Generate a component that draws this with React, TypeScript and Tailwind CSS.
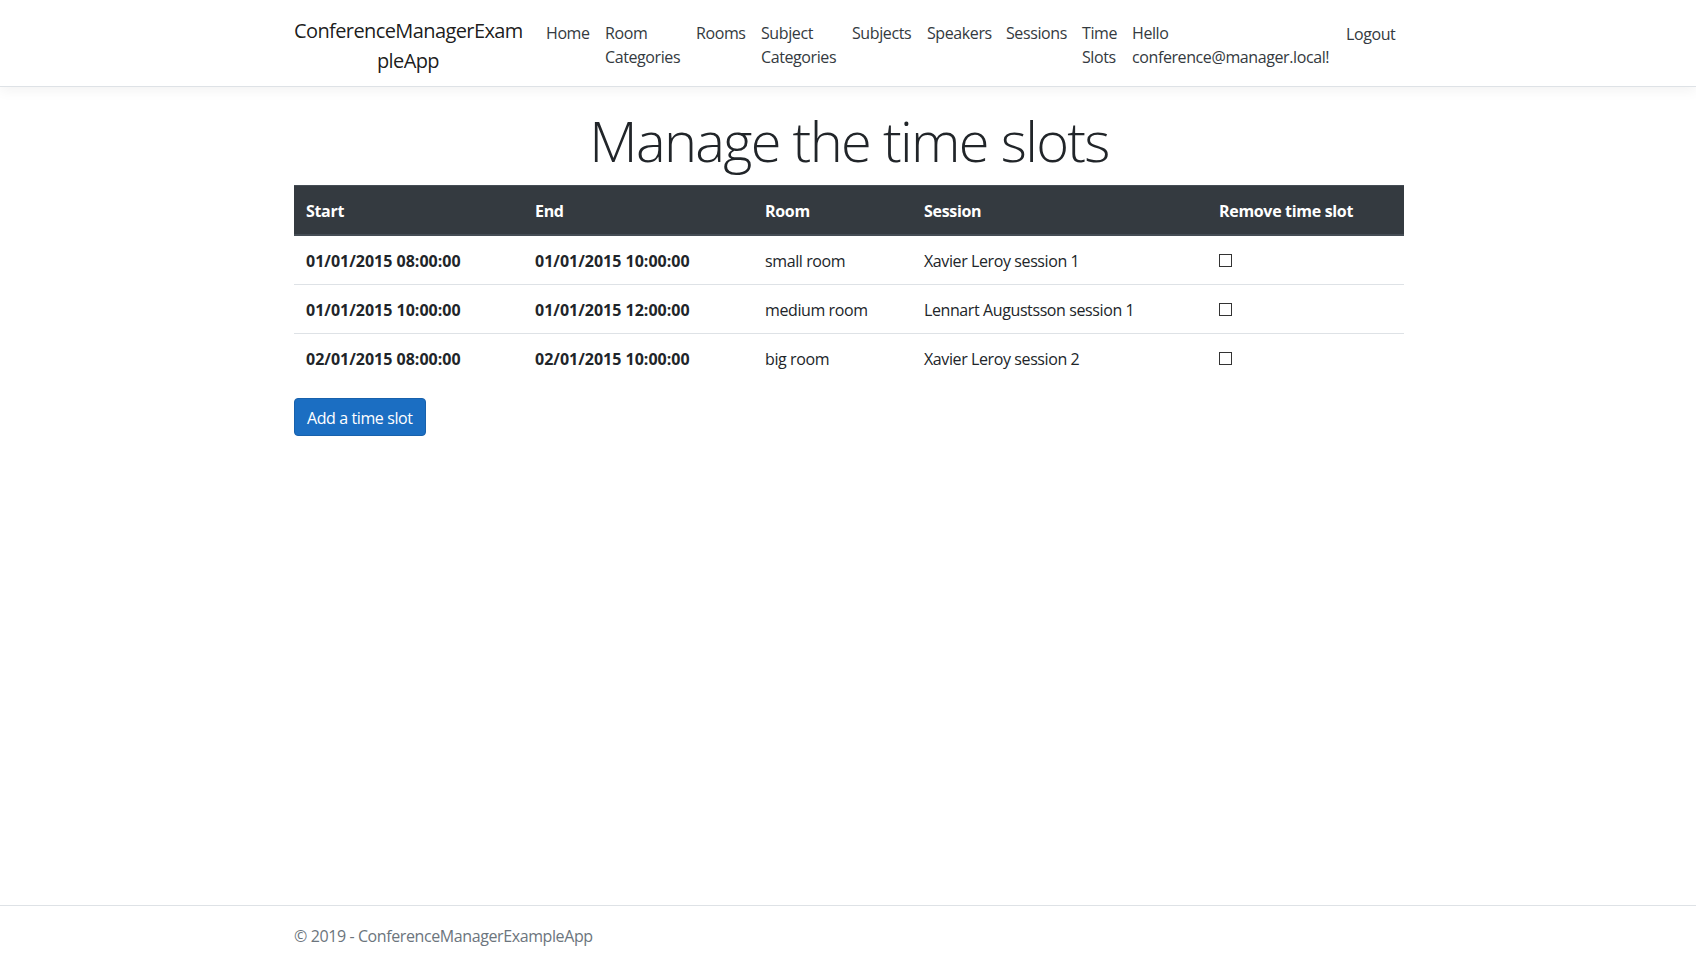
import React from 'react';

type NavItem = { label: React.ReactNode; width: string };

const navItems: NavItem[] = [
    { label: 'Home', width: 'w-[59px]' },
    { label: <>Room<br />Categories</>, width: 'w-[91px]' },
    { label: 'Rooms', width: 'w-[65px]' },
    { label: <>Subject<br />Categories</>, width: 'w-[91px]' },
    { label: 'Subjects', width: 'w-[75px]' },
    { label: 'Speakers', width: 'w-[79px]' },
    { label: 'Sessions', width: 'w-[76px]' },
    { label: <>Time<br />Slots</>, width: 'w-[50px]' },
];

type TimeSlot = { start: string; end: string; room: string; session: string };

const slots: TimeSlot[] = [
    { start: '01/01/2015 08:00:00', end: '01/01/2015 10:00:00', room: 'small room', session: 'Xavier Leroy session 1' },
    { start: '01/01/2015 10:00:00', end: '01/01/2015 12:00:00', room: 'medium room', session: 'Lennart Augustsson session 1' },
    { start: '02/01/2015 08:00:00', end: '02/01/2015 10:00:00', room: 'big room', session: 'Xavier Leroy session 2' },
];

const Navbar: React.FC = () => (
    <nav className="mb-4 border-b border-[#dee2e6] bg-white px-4 py-2 shadow-[0_4px_12px_rgba(0,0,0,0.05)]">
        <div className="mx-auto flex w-[1140px] items-center pr-[14px] pl-[16px]">
            <a className="mr-4 w-[228px] shrink-0 pt-[8px] pb-[2px] text-center text-[20px] leading-[30px] tracking-[-0.03em] whitespace-nowrap text-black/90">
                ConferenceManagerExam<br />pleApp
            </a>
            <ul className="flex grow items-start">
                {navItems.map((item, i) => (
                    <li key={i} className={`${item.width} shrink-0`}>
                        <a className="block px-2 pt-[10px] pb-[6px] leading-6 whitespace-nowrap text-[#343a40]">{item.label}</a>
                    </li>
                ))}
            </ul>
            <ul className="flex items-start">
                <li className="w-[210px] shrink-0">
                    <a className="block px-2 pt-[10px] pb-[6px] leading-6 whitespace-nowrap text-[#343a40]">
                        Hello<br />conference@manager.local!
                    </a>
                </li>
                <li className="w-[70px] shrink-0">
                    <button className="px-3 pt-[11px] pb-[5px] leading-6 text-[#343a40]">Logout</button>
                </li>
            </ul>
        </div>
    </nav>
);

const headCell = 'border-t border-b-2 border-[#454d55] px-3 pt-[13px] pb-[11px] leading-6 font-bold tracking-[-0.02em]';
const bodyCell = 'px-3 pt-[13px] pb-[11px] leading-6';

const TimeSlotTable: React.FC = () => (
    <table className="mb-4 w-full table-fixed text-left">
        <thead>
            <tr className="bg-[#343a40] text-white">
                <th className={`w-[229px] ${headCell}`}>Start</th>
                <th className={`w-[230px] ${headCell}`}>End</th>
                <th className={`w-[159px] ${headCell}`}>Room</th>
                <th className={`w-[295px] ${headCell}`}>Session</th>
                <th className={headCell}>Remove time slot</th>
            </tr>
        </thead>
        <tbody>
            {slots.map((slot, i) => (
                <tr key={i} className={i > 0 ? 'border-t border-[#dee2e6]' : ''}>
                    <td className={`${bodyCell} font-bold tracking-normal`}>{slot.start}</td>
                    <td className={`${bodyCell} font-bold tracking-normal`}>{slot.end}</td>
                    <td className={bodyCell}>{slot.room}</td>
                    <td className={bodyCell}>{slot.session}</td>
                    <td className="p-3 leading-6">
                        <div className="flex h-6 items-center">
                            <span className="block h-[13px] w-[13px] border border-[#333] bg-white" />
                        </div>
                    </td>
                </tr>
            ))}
        </tbody>
    </table>
);

export default function App() {
    return (
        <div className="flex min-h-screen flex-col bg-white font-['Open_Sans',sans-serif] text-base tracking-[-0.025em] text-[#212529]">
            <Navbar />
            <main className="mx-auto w-[1140px] pr-[14px] pb-4 pl-[16px]">
                <h1 className="mb-[11px] pt-[4px] text-center text-[56px] leading-[1.2] font-light tracking-[-0.03em]">Manage the time slots</h1>
                <TimeSlotTable />
                <button className="rounded-[4px] border border-[#1861ac] bg-[#1b6ec2] px-3 pt-[7px] pb-[5px] leading-6 text-white">
                    Add a time slot
                </button>
            </main>
            <footer className="mt-auto border-t border-[#dee2e6] pt-[1px] leading-[59px] whitespace-nowrap text-[#6c757d]">
                <div className="mx-auto w-[1140px] pr-[14px] pl-[16px]">© 2019 - ConferenceManagerExampleApp</div>
            </footer>
        </div>
    );
}
